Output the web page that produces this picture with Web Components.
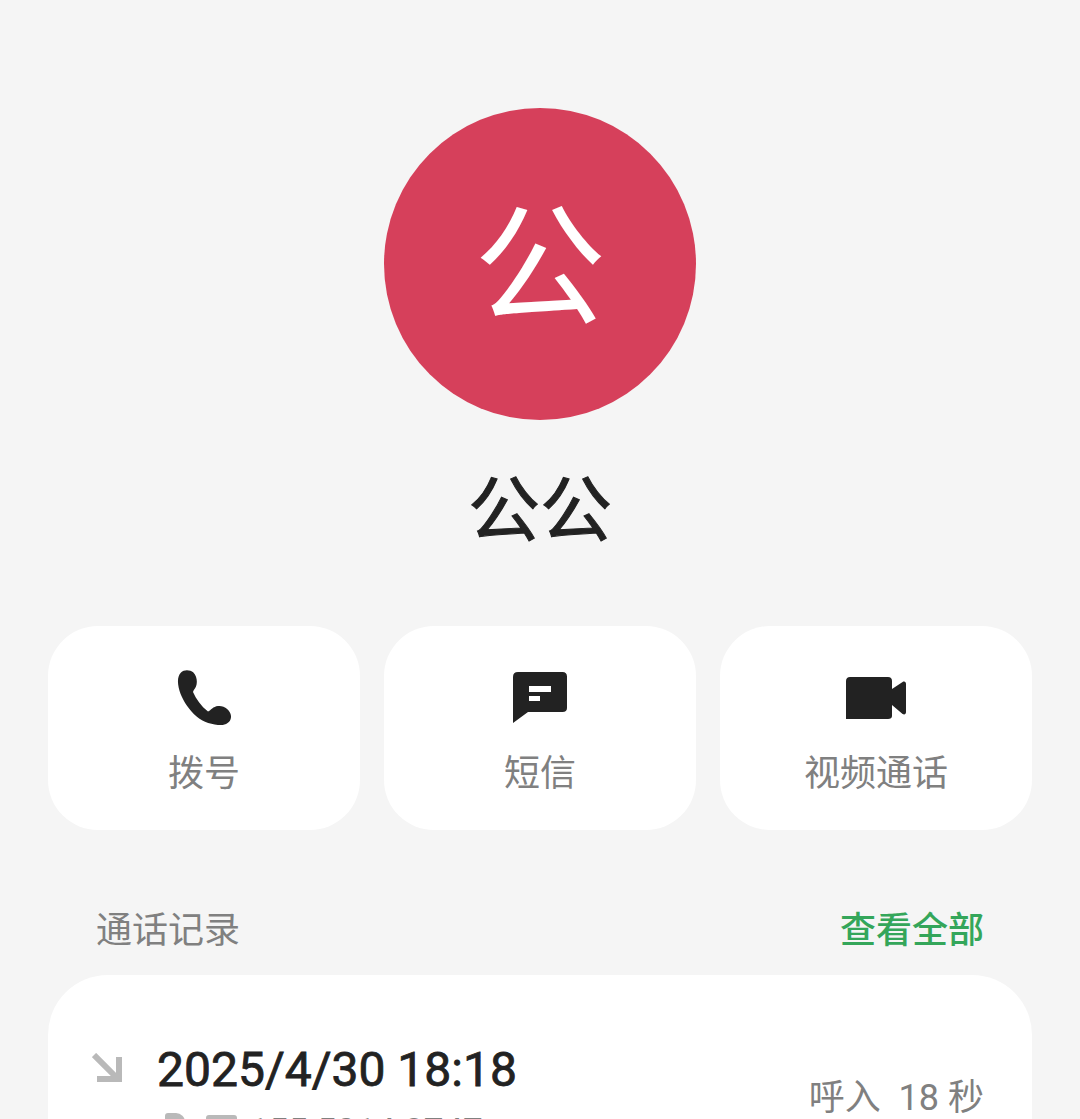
<!DOCTYPE html>
<html lang="zh">
<head>
<meta charset="utf-8">
<style>
    html, body { margin: 0; height: 1119px; overflow: hidden; background: #f5f5f5; }
    body { font-family: Roboto, "Noto Sans CJK SC", sans-serif; }
</style>
</head>
<body>
<contact-page>
    <contact-header name="公公" letter="公"></contact-header>
    <action-row>
        <action-button label="拨号" icon="phone"></action-button>
        <action-button label="短信" icon="message"></action-button>
        <action-button label="视频通话" icon="video"></action-button>
    </action-row>
    <call-log>
        <call-item time="2025/4/30 18:18" number="155 5014 8747" detail="呼入&#160;&#160;18 秒"></call-item>
    </call-log>
</contact-page>

<script>
    const ICONS = {
        phone: { w: 54, h: 55, box: "0 0 27 27.500", d: '<path d="M2 1.200C3.500-.2 6.500-.2 8.200 1.300 10 3 10.300 6.300 9.500 8.200 8.900 9.600 8.200 10 8 11 9.500 14.500 12 18 15.500 20.800 17 20 18 18.300 20.500 18 23.500 17.600 26.800 20 27 23 27.200 26 24.500 27.500 22 27.500 18 27.500 13 26 9.800 23.200 6 20 3.500 16 1.800 12 .3 8-.3 3.500 2 1.200Z"/>' },
        message: { w: 54, h: 51, box: "0 0 27 25.500", d: '<path fill-rule="evenodd" d="M2.500 0H24.800C26.200 0 27 .8 27 2.200V18C27 19.300 26.200 20 24.800 20H7.500L0 25.500V2.500C0 .8.800 0 2.500 0ZM8 7V10H19V7ZM8 12V14.500H13.500V12Z"/>' },
        video: { w: 60, h: 42, box: "0 0 30 21", d: '<path d="M2 0H21C22.300 0 23 .8 23 2V6L28.300 2.500C29.300 2 30 2.500 30 3.500V17.500C30 18.500 29.300 19 28.300 18.500L23 14V19.500C23 20.400 22.300 21 21 21H0V2C0 .8.800 0 2 0Z"/>' }
    };

    customElements.define("contact-page", class extends HTMLElement {
        constructor() {
            super();
            this.attachShadow({ mode: "open" }).innerHTML = `
                <style>
                    :host { display: flex; flex-direction: column; padding: 108px 48px 0; box-sizing: border-box; height: 1119px; overflow: hidden; }
                </style>
                <slot></slot>`;
        }
    });

    customElements.define("contact-header", class extends HTMLElement {
        constructor() {
            super();
            this.attachShadow({ mode: "open" }).innerHTML = `
                <style>
                    :host { display: flex; flex-direction: column; align-items: center; }
                    .avatar {
                        width: 312px; height: 312px; border-radius: 50%; background: #d6405b; color: #fff;
                        display: flex; align-items: center; justify-content: center;
                        box-sizing: border-box; padding-bottom: 15px;
                        font: 400 132px/1 "Noto Sans CJK SC", sans-serif;
                    }
                    .name { margin-top: 41px; font: 400 72px/86px "Noto Sans CJK SC", sans-serif; -webkit-text-stroke: 1px #222; color: #222; }
                </style>
                <div class="avatar">${this.getAttribute("letter")}</div>
                <div class="name">${this.getAttribute("name")}</div>`;
        }
    });

    customElements.define("action-row", class extends HTMLElement {
        constructor() {
            super();
            this.attachShadow({ mode: "open" }).innerHTML = `
                <style>
                    :host { display: grid; grid-template-columns: repeat(3, 312px); gap: 24px; margin-top: 79px; }
                </style>
                <slot></slot>`;
        }
    });

    customElements.define("action-button", class extends HTMLElement {
        constructor() {
            super();
            const icon = ICONS[this.getAttribute("icon")];
            this.attachShadow({ mode: "open" }).innerHTML = `
                <style>
                    :host { display: flex; flex-direction: column; align-items: center; height: 204px; background: #fff; border-radius: 50px; }
                    .icon { height: 55px; margin-top: 44px; display: flex; align-items: center; }
                    svg { display: block; fill: #222; }
                    .label { margin-top: 18px; font: 400 36px/54px "Noto Sans CJK SC", sans-serif; color: #808080; }
                </style>
                <div class="icon"><svg width="${icon.w}" height="${icon.h}" viewBox="${icon.box}">${icon.d}</svg></div>
                <div class="label">${this.getAttribute("label")}</div>`;
        }
    });

    customElements.define("call-log", class extends HTMLElement {
        constructor() {
            super();
            this.attachShadow({ mode: "open" }).innerHTML = `
                <style>
                    :host { display: block; margin-top: 70px; }
                    .head { display: flex; justify-content: space-between; padding: 0 48px; font: 400 36px/54px "Noto Sans CJK SC", sans-serif; color: #808080; }
                    .all { color: #34a65a; font-weight: 500; }
                    .card { margin-top: 21px; background: #fff; border-radius: 60px 60px 0 0; padding: 67px 48px 0 44px; }
                </style>
                <div class="head"><span>通话记录</span><span class="all">查看全部</span></div>
                <div class="card"><slot></slot></div>`;
        }
    });

    customElements.define("call-item", class extends HTMLElement {
        constructor() {
            super();
            this.attachShadow({ mode: "open" }).innerHTML = `
                <style>
                    :host { display: grid; grid-template-columns: 65px 1fr auto; align-items: start; }
                    .arrow { display: block; margin-top: 11px; }
                    .time { font: 400 48px/56px Roboto, sans-serif; -webkit-text-stroke: 0.8px #222; color: #222; }
                    .sub { margin-top: 12px; padding-left: 8px; display: flex; align-items: flex-start; font: 400 35px/44px Roboto, sans-serif; color: #808080; }
                    .detail { margin-top: 36px; font: 400 36px/40px Roboto, "Noto Sans CJK SC", sans-serif; color: #808080; }
                    .sim { width: 20px; height: 28px; margin: 3px 21px 0 0; background: #b9b9b9; border-radius: 3px 9px 3px 3px; }
                    .box { width: 31px; height: 26px; margin: 5px 12px 0 0; background: #b9b9b9; border-radius: 3px; }
                </style>
                <svg class="arrow" width="30" height="30" viewBox="0 0 30 30"><path d="M2 2 25 25M5 26H27V4" fill="none" stroke="#b9b9b9" stroke-width="6"/></svg>
                <div>
                    <div class="time">${this.getAttribute("time")}</div>
                    <div class="sub"><span class="sim"></span><span class="box"></span><span>${this.getAttribute("number")}</span></div>
                </div>
                <div class="detail">${this.getAttribute("detail")}</div>`;
        }
    });
</script>
</body>
</html>
